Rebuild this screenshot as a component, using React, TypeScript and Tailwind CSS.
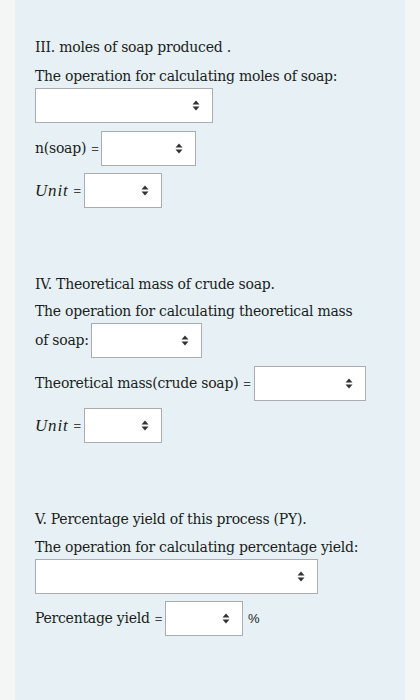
import React from "react";

function Arrows() {
  return (
    <svg width="8" height="11" viewBox="0 0 8 11" className="text-[#333]">
      <path d="M4 0.5 L7.5 4.5 L0.5 4.5 Z" fill="currentColor" />
      <path d="M4 10.5 L7.5 6.5 L0.5 6.5 Z" fill="currentColor" />
    </svg>
  );
}

function Select({ w }: { w: string }) {
  return (
    <div className={`${w} h-[35px] bg-white border border-[#a9adb1] flex items-center justify-end pr-[12px] shrink-0`}>
      <Arrows />
    </div>
  );
}

function Eq() {
  return <span className="font-['Liberation_Sans',sans-serif] text-[13px] text-[#444] ml-[5px] mr-[3px]">=</span>;
}

function UnitRow() {
  return (
    <div className="flex items-center mt-[7px]">
      <span className="font-['Liberation_Serif',serif] italic text-[17px] tracking-[0.8px]">Unit</span>
      <Eq />
      <Select w="w-[78px]" />
    </div>
  );
}

export default function App() {
  return (
    <div className="min-h-screen bg-[#f4f5f5] px-[15px] font-['DejaVu_Serif',serif] text-[14px] tracking-[-0.25px] text-[#1a1d21]">
      <div className="min-h-[700px] bg-[#e7f1f5] pl-[20px] pt-[35px] pb-10">
        {/* III */}
        <p className="leading-[24px]">III. moles of soap produced .</p>
        <p className="leading-[24px] mt-[5px]">The operation for calculating moles of soap:</p>
        <Select w="w-[178px]" />
        <div className="flex items-center mt-[8px]">
          <span>n(soap)</span>
          <Eq />
          <Select w="w-[95px]" />
        </div>
        <UnitRow />

        {/* IV */}
        <p className="leading-[24px] mt-[64px]">IV. Theoretical mass of crude soap.</p>
        <p className="leading-[23px] mt-[4px]">The operation for calculating theoretical mass</p>
        <div className="flex items-center">
          <span className="mr-[2px]">of soap:</span>
          <Select w="w-[111px]" />
        </div>
        <div className="flex items-center mt-[8px]">
          <span>Theoretical mass(crude soap)</span>
          <Eq />
          <Select w="w-[112px]" />
        </div>
        <UnitRow />

        {/* V */}
        <p className="leading-[24px] mt-[64px]">V. Percentage yield of this process (PY).</p>
        <p className="leading-[23px] mt-[5px]">The operation for calculating percentage yield:</p>
        <Select w="w-[283px]" />
        <div className="flex items-center mt-[7px]">
          <span>Percentage yield</span>
          <Eq />
          <Select w="w-[78px]" />
          <span className="ml-[5px] font-['Liberation_Sans',sans-serif] text-[13px]">%</span>
        </div>
      </div>
    </div>
  );
}
